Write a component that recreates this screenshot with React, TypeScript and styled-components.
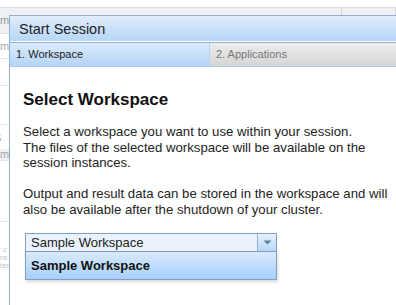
import styled, { createGlobalStyle } from "styled-components";

const GlobalStyle = createGlobalStyle`
  html, body {
    margin: 0;
    padding: 0;
    background: #fff;
    font-family: "Liberation Sans", Arial, sans-serif;
  }
  #root {
    width: 396px;
    height: 305px;
    overflow: hidden;
    position: relative;
  }
`;

// ---- page behind the dialog ----
const Page = styled.div`
  padding-top: 7px;
  width: 396px;
  height: 305px;
  box-sizing: border-box;
`;

const GridHeader = styled.div`
  display: flex;
  height: 25px;
  background: #eef0f3;
  border-top: 1px solid #dcdcdc;
  border-bottom: 1px solid #e2e2e2;
`;

const HeaderCell = styled.div<{ $width?: number }>`
  width: ${(p) => (p.$width ? `${p.$width}px` : "auto")};
  flex: ${(p) => (p.$width ? "none" : "1")};
  border-right: 1px solid #d4d6da;
  font-size: 11px;
  color: #9a9a9a;
  line-height: 25px;
  text-indent: -14px;
  overflow: hidden;
`;

const GridRow = styled.div<{ $h: number; $shade?: boolean }>`
  height: ${(p) => p.$h}px;
  background: ${(p) => (p.$shade ? "#eef0f3" : "#fff")};
  border-bottom: 1px solid #e6e6e6;
  font-size: 11px;
  color: #a8a8a8;
  line-height: ${(p) => p.$h}px;
  text-indent: -14px;
  overflow: hidden;
`;

const SectionTitle = styled.div`
  height: 24px;
  font-size: 17px;
  color: #8a8a8a;
  line-height: 24px;
  text-indent: -12px;
  overflow: hidden;
`;

const FaintLines = styled.div`
  padding-top: 24px;
  font-size: 8px;
  line-height: 8px;
  color: #c4c4c4;
  text-indent: -8px;
  overflow: hidden;
`;

// ---- dialog ----
const Window = styled.div`
  position: absolute;
  left: 9px;
  top: 15px;
  width: 420px;
  height: 320px;
  background: #fff;
  border: 1px solid #8fafd4;
  box-sizing: border-box;
`;

const TitleBar = styled.div`
  height: 25px;
  padding-left: 9px;
  background: linear-gradient(#e0edfc, #b6d6f8);
  border-bottom: 1px solid #fff;
  font-size: 14.5px;
  line-height: 26px;
  color: #222;
`;

const Tabs = styled.div`
  display: flex;
  height: 23px;
  border-top: 1px solid #8fafd4;
  border-bottom: 1px solid #a9cbf2;
`;

const Tab = styled.div<{ $active?: boolean }>`
  box-sizing: border-box;
  width: ${(p) => (p.$active ? "199px" : "auto")};
  flex: ${(p) => (p.$active ? "none" : "1")};
  padding-left: 6px;
  font-size: 11px;
  line-height: 23px;
  color: ${(p) => (p.$active ? "#222" : "#777")};
  background: ${(p) =>
    p.$active
      ? "linear-gradient(#dcebfc, #b4d4f7)"
      : "linear-gradient(#ececec, #d5d5d5)"};
  border-left: ${(p) => (p.$active ? "none" : "1px solid #b4d2f4")};
`;

const Body = styled.div`
  padding: 22px 13px 0 13px;
`;

const Heading = styled.h2`
  margin: 0 0 14px 0;
  font-size: 17px;
  font-weight: bold;
  color: #111;
  line-height: 21px;
`;

const Para = styled.p`
  margin: 0 0 15.5px 0;
  font-size: 13.2px;
  line-height: 15.5px;
  color: #222;
`;

const Combo = styled.div`
  margin-left: 2px;
  margin-top: 16px;
  width: 252px;
`;

const ComboField = styled.div`
  display: flex;
  height: 19px;
  border: 1px solid #7f9fc6;
  background: #eaf3fd;
  box-sizing: border-box;
`;

const ComboText = styled.div`
  flex: 1;
  padding-left: 5px;
  font-size: 13px;
  line-height: 17px;
  color: #222;
`;

const Trigger = styled.div`
  width: 18px;
  border-left: 1px solid #8eaed4;
  background: linear-gradient(#e6f0fc, #b8d8f8);
  display: flex;
  align-items: center;
  justify-content: center;
`;

const List = styled.div`
  height: 28px;
  border: 1px solid #7f9fc6;
  border-top: none;
  box-sizing: border-box;
  box-shadow: 1px 2px 3px rgba(0, 0, 0, 0.15);
`;

const ListItem = styled.div`
  height: 27px;
  padding-left: 5px;
  background: linear-gradient(#d9eafc, #a7d0fb);
  font-size: 13px;
  font-weight: bold;
  line-height: 27px;
  color: #111;
`;

export default function App() {
  return (
    <>
      <GlobalStyle />
      <Page>
        <GridHeader>
          <HeaderCell $width={341}>Name</HeaderCell>
          <HeaderCell />
        </GridHeader>
        <GridRow $h={24}>Name</GridRow>
        <GridRow $h={26} />
        <GridRow $h={38} />
        <SectionTitle>Is</SectionTitle>
        <GridRow $h={11} $shade>Name</GridRow>
        <GridRow $h={60} />
        <FaintLines>
          ay c
          <br />
          ra r
          <br />
          tem
        </FaintLines>
      </Page>
      <Window>
        <TitleBar>Start Session</TitleBar>
        <Tabs>
          <Tab $active>1. Workspace</Tab>
          <Tab>2. Applications</Tab>
        </Tabs>
        <Body>
          <Heading>Select Workspace</Heading>
          <Para>
            Select a workspace you want to use within your session.
            <br />
            The files of the selected workspace will be available on the
            <br />
            session instances.
          </Para>
          <Para>
            Output and result data can be stored in the workspace and will
            <br />
            also be available after the shutdown of your cluster.
          </Para>
          <Combo>
            <ComboField>
              <ComboText>Sample Workspace</ComboText>
              <Trigger>
                <svg width="9" height="5" viewBox="0 0 9 5">
                  <path d="M0.5 0.5 L8.5 0.5 L4.5 4.5 Z" fill="#5d7ea6" />
                </svg>
              </Trigger>
            </ComboField>
            <List>
              <ListItem>Sample Workspace</ListItem>
            </List>
          </Combo>
        </Body>
      </Window>
    </>
  );
}
